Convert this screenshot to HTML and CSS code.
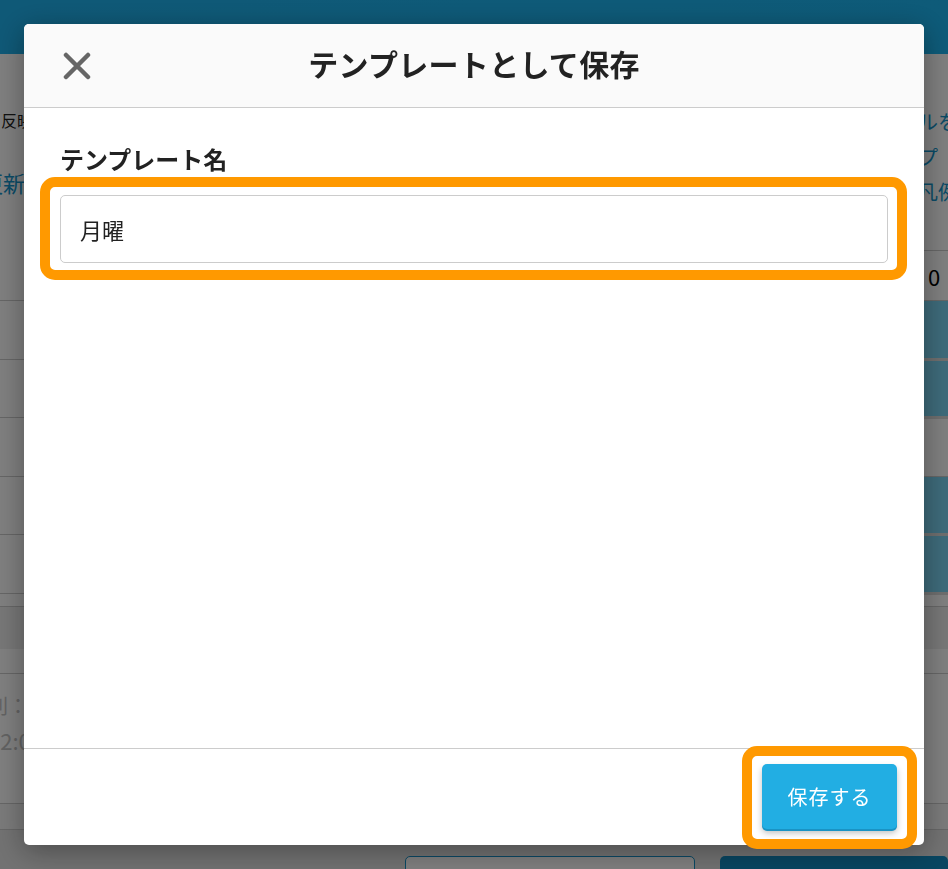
FILE: index.html
```html
<!DOCTYPE html>
<html lang="ja">
<head>
    <meta charset="UTF-8">
    <meta name="viewport" content="width=device-width, initial-scale=1.0">
    <title>テンプレートとして保存</title>
    <link rel="stylesheet" href="styles.css">
</head>
<body>
    <div class="page">
        <header class="topbar"></header>

        <div class="intro">
            <div class="intro-left">
                <p class="note">反映</p>
                <p class="link shifted">更新</p>
            </div>
            <div class="intro-right">
                <p class="link">ルを</p>
                <p class="link">プ</p>
                <p class="link">凡例</p>
            </div>
        </div>

        <table class="grid">
            <tr class="head">
                <td class="label"></td>
                <td class="last">0</td>
            </tr>
            <tr><td class="label"></td><td class="last on"></td></tr>
            <tr><td class="label"></td><td class="last on"></td></tr>
            <tr><td class="label"></td><td class="last"></td></tr>
            <tr><td class="label"></td><td class="last on"></td></tr>
            <tr><td class="label"></td><td class="last on"></td></tr>
            <tr class="spacer"><td class="label"></td><td class="last"></td></tr>
        </table>

        <div class="section-bar"></div>

        <div class="rules">
            <p class="rule-name">規則：</p>
            <p class="rule-time">12:00</p>
        </div>
        <div class="rules-foot"></div>

        <div class="actions">
            <button class="btn-outline">キャンセル</button>
            <button class="btn-fill">登録する</button>
        </div>
    </div>

    <div class="overlay"></div>

    <div class="modal">
        <div class="modal-header">
            <button class="close" aria-label="閉じる">
                <svg width="28" height="28" viewBox="0 0 28 28">
                    <path d="M3 3 L25 25 M25 3 L3 25" stroke="#666" stroke-width="4.5" stroke-linecap="round" fill="none"/>
                </svg>
            </button>
            <h1 class="modal-title">テンプレートとして保存</h1>
            <span></span>
        </div>

        <div class="modal-body">
            <label class="field-label" for="template-name">テンプレート名</label>
            <div class="field highlight">
                <input type="text" id="template-name" value="月曜">
            </div>
        </div>

        <div class="modal-footer">
            <button class="save highlight">保存する</button>
        </div>
    </div>
</body>
</html>
```

FILE: styles.css
```css
* {
    margin: 0;
    padding: 0;
    box-sizing: border-box;
}

body {
    font-family: "Noto Sans CJK JP", "Noto Sans", sans-serif;
    background-color: #fff;
    color: #222;
    width: 948px;
    height: 869px;
    overflow: hidden;
}

/* page behind the dialog */

.page {
    width: 948px;
}

.topbar {
    height: 54px;
    background: linear-gradient(90deg, #1fb2ee, #1cb6f2);
}

.intro {
    display: flex;
    height: 196px;
}

.intro-left {
    flex: 1;
    min-width: 0;
    padding-top: 56px;
}

.intro-right {
    width: 24px;
    overflow: hidden;
    white-space: nowrap;
    padding-top: 50px;
}

.intro-right .link {
    margin-left: -6px;
}

.note {
    font-size: 16px;
    line-height: 20px;
    padding-left: 1px;
}

.link {
    color: #1495cc;
    font-size: 20px;
    line-height: 35px;
}

.intro-left .shifted {
    font-size: 22px;
    line-height: 28px;
    margin-top: 38px;
    margin-left: -19px;
}

.grid {
    width: 948px;
    border-collapse: collapse;
    table-layout: fixed;
}

.grid td {
    height: 58.5px;
    border-bottom: 1px solid #ccc;
    padding: 0;
}

.grid .head td {
    height: 50px;
    border-bottom: 1px solid #ccc;
}

.grid .head .last {
    border-top: 1px solid #ccc;
    font-size: 22px;
    padding-left: 4px;
    color: #000;
}

.grid .label {
    width: 924px;
}

.grid .last {
    width: 24px;
}

.grid .on {
    background-color: #7cd5f4;
    border-bottom: 3px solid #ddd;
}

.grid .spacer td {
    height: 13px;
}

.section-bar {
    height: 42px;
    background-color: #eee;
}

.rules {
    margin-top: 24px;
    border-top: 1px solid #ccc;
    border-bottom: 1px solid #ccc;
    height: 131px;
    padding-top: 14px;
    color: #c4c4c4;
    font-size: 20px;
    line-height: 35px;
}

.rule-name {
    margin-left: -32px;
}

.rule-time {
    margin-left: -12px;
    font-size: 22px;
}

.rules-foot {
    height: 26px;
    border-bottom: 1px solid #ccc;
    background-color: #f4f4f4;
}

.actions {
    display: flex;
    justify-content: flex-end;
    gap: 25px;
    padding-top: 26px;
    background-color: #e4e4e4;
    height: 100px;
}

.btn-outline,
.btn-fill {
    height: 50px;
    border-radius: 5px;
    font-family: inherit;
    font-size: 18px;
}

.btn-outline {
    width: 290px;
    background-color: #fff;
    border: 1px solid #1590c8;
    color: #1590c8;
}

.btn-fill {
    width: 228px;
    background-color: #128cc2;
    border: none;
    color: #fff;
}

.overlay {
    position: fixed;
    inset: 0;
    background-color: rgba(0, 0, 0, 0.5);
}

/* dialog */

.modal {
    position: fixed;
    left: 24px;
    top: 24px;
    width: 900px;
    height: 821px;
    background-color: #fff;
    border-radius: 5px;
    box-shadow: 0 6px 28px rgba(0, 0, 0, 0.35);
    display: flex;
    flex-direction: column;
}

.modal-header {
    height: 84px;
    background-color: #fafafa;
    border-bottom: 1px solid #ccc;
    border-radius: 5px 5px 0 0;
    display: grid;
    grid-template-columns: 1fr auto 1fr;
    align-items: center;
    padding: 0 39px;
}

.close {
    justify-self: start;
    width: 28px;
    height: 28px;
    background: none;
    border: none;
    cursor: pointer;
    display: flex;
    margin-top: 1px;
}

.modal-title {
    font-size: 30px;
    font-weight: 700;
    letter-spacing: 0.3px;
    color: #222;
    line-height: 40px;
    padding-bottom: 6px;
}

.modal-body {
    flex: 1;
    padding: 34px 36px 0;
}

.field-label {
    display: block;
    font-size: 24px;
    font-weight: 700;
    line-height: 34px;
    margin-bottom: 19px;
    color: #222;
}

.field {
    position: relative;
}

.field input {
    width: 100%;
    height: 68px;
    border: 1px solid #ccc;
    border-radius: 5px;
    padding: 0 19px;
    font-family: inherit;
    font-size: 22px;
    color: #222;
    background-color: #fff;
    outline: none;
}

.modal-footer {
    height: 97px;
    border-top: 1px solid #ccc;
    display: flex;
    justify-content: flex-end;
    padding: 15px 27px 16px;
}

.save {
    position: relative;
    width: 135px;
    height: 65px;
    background-color: #22aee3;
    border: none;
    border-radius: 5px;
    color: #fff;
    font-family: inherit;
    font-size: 20px;
    letter-spacing: 1px;
    box-shadow: 0 2px 0 #1a93c4, 0 4px 6px rgba(0, 0, 0, 0.25);
    cursor: pointer;
}

/* orange annotation rings */

.highlight::after {
    content: "";
    position: absolute;
    border: 10px solid #ff9900;
    border-radius: 15px;
    pointer-events: none;
}

.field.highlight::after {
    top: -18px;
    right: -19px;
    bottom: -17px;
    left: -20px;
}

.save.highlight::after {
    top: -18px;
    right: -20px;
    bottom: -20px;
    left: -20px;
}
```
